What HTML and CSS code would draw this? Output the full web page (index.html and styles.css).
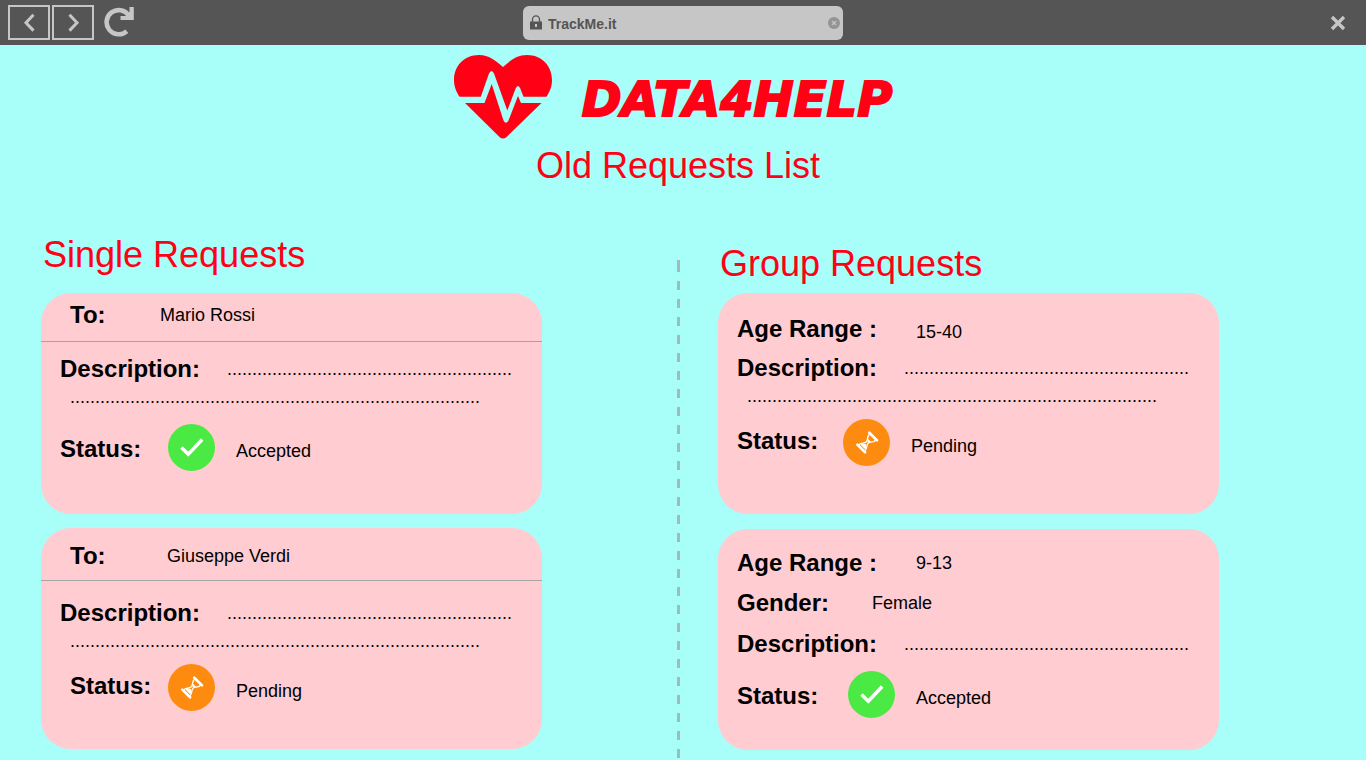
FILE: index.html
```html
<!DOCTYPE html>
<html lang="en">
<head>
<meta charset="utf-8">
<meta name="viewport" content="width=device-width, initial-scale=1">
<title>Data4Help – Old Requests List</title>
<link rel="stylesheet" href="styles.css">
</head>
<body>
<svg class="defs" aria-hidden="true">
  <symbol id="check" viewBox="0 0 47 47">
    <circle cx="23.5" cy="23.5" r="23.5" fill="#4be944"/>
    <path d="M13.500 23.500L20.300 30.300L34.200 15.500" fill="none" stroke="#fff" stroke-width="3.500"/>
  </symbol>
  <symbol id="hourglass" viewBox="0 0 47 47">
    <circle cx="23.5" cy="23.5" r="23.5" fill="#fd8b10"/>
    <g transform="translate(24.200 23.500) rotate(45) scale(.84)" fill="none" stroke="#fff">
      <path d="M-6.500 -10H6.500M-6.500 10H6.500" stroke-width="3.200" stroke-linecap="round"/>
      <path d="M-5.200 -9.500C-5.200 -4 -1.300 -3 -1.300 0S-5.200 4 -5.200 9.500M5.200 -9.500C5.200 -4 1.300 -3 1.300 0S5.200 4 5.200 9.500" stroke-width="1.500"/>
      <path d="M-4 7.500C-4 5 -1.500 2.500 0 2.500S4 5 4 7.500ZM-2.500 -3.800H2.500L0 -0.500Z" fill="#fff" stroke="none"/>
    </g>
  </symbol>
</svg>

<header class="browser">
  <nav class="browser-nav">
    <button class="nav-button" type="button" aria-label="Back">
      <svg width="38" height="31" viewBox="0 0 38 31"><path d="M23.500 7.800L16 15.700L23.500 23.600"/></svg>
    </button>
    <button class="nav-button" type="button" aria-label="Forward">
      <svg width="38" height="31" viewBox="0 0 38 31"><path d="M15.500 7.800L23 15.700L15.500 23.600"/></svg>
    </button>
    <button class="icon-button reload" type="button" aria-label="Reload">
      <svg width="30" height="30" viewBox="0 0 30 30">
        <path d="M22.800 24.200A12.100 12.100 0 1 1 24.800 8.500" fill="none" stroke="#c6c6c6" stroke-width="4.600"/>
        <path d="M25.500 0H29.800V13H16.500V9H22L25.500 5Z" fill="#c6c6c6"/>
      </svg>
    </button>
  </nav>
  <div class="address">
    <svg width="12" height="15" viewBox="0 0 12 15" aria-hidden="true">
      <path d="M2.500 7V4.500A3.500 3.700 0 0 1 9.500 4.500V7" fill="none" stroke="#555" stroke-width="1.300"/>
      <path d="M0 6.500H12V14.500H0ZM5 9V12H7V9Z" fill="#555" fill-rule="evenodd"/>
    </svg>
    <input class="address-input" type="text" value="TrackMe.it" aria-label="Address">
    <button class="icon-button" type="button" aria-label="Clear address">
      <svg width="12" height="12" viewBox="0 0 12 12"><circle cx="6" cy="6" r="6" fill="#949494"/><path d="M4 4L8 8M8 4L4 8" stroke="#c6c6c6" stroke-width="1.200"/></svg>
    </button>
  </div>
  <button class="icon-button close" type="button" aria-label="Close">
    <svg width="16" height="16" viewBox="0 0 16 16"><path d="M2 2L14 14M14 2L2 14" stroke="#c6c6c6" stroke-width="3.300"/></svg>
  </button>
</header>

<main class="page">
  <div class="brand">
    <svg class="heart" width="98" height="84" viewBox="0 0 98 84" aria-hidden="true">
      <path d="M49 12C57 5 63 0 73 0C88 0 98 11 98 25C98 32 95.500 37 92.500 41.700H69.500L66.300 33.500Q64 28.500 61.600 33.500L53.300 55.500L40 18.500Q37.500 13.500 35 18.500L26.800 41.700H5.500C2.500 37 0 32 0 25C0 11 10 0 25 0C35 0 41 5 49 12Z" fill="#ff0015"/>
      <path d="M11 48H30.500L37.700 29L49.500 65.500Q52 70 54.500 65.500L64 41L67 48H87.500L52.500 82Q49 85 45.500 82Z" fill="#ff0015"/>
    </svg>
    <span class="brand-name">DATA4HELP</span>
  </div>
  <h1 class="title">Old Requests List</h1>

  <div class="columns">
    <section class="column single">
      <h2 class="column-title">Single Requests</h2>
      <article class="card">
        <div class="card-head"><span class="label">To:</span><span class="value">Mario Rossi</span></div>
        <div class="row"><span class="label">Description:</span><span class="value">.........................................................</span></div>
        <p class="more">..................................................................................</p>
        <div class="row status"><span class="label">Status:</span><svg class="badge" aria-hidden="true"><use href="#check"/></svg><span class="value">Accepted</span></div>
      </article>
      <article class="card roomy">
        <div class="card-head"><span class="label">To:</span><span class="value">Giuseppe Verdi</span></div>
        <div class="row"><span class="label">Description:</span><span class="value">.........................................................</span></div>
        <p class="more">..................................................................................</p>
        <div class="row status"><span class="label">Status:</span><svg class="badge" aria-hidden="true"><use href="#hourglass"/></svg><span class="value">Pending</span></div>
      </article>
    </section>

    <div class="divider"></div>

    <section class="column group">
      <h2 class="column-title">Group Requests</h2>
      <article class="card">
        <div class="row age"><span class="label">Age Range :</span><span class="value">15-40</span></div>
        <div class="row"><span class="label">Description:</span><span class="value">.........................................................</span></div>
        <p class="more">..................................................................................</p>
        <div class="row status"><span class="label">Status:</span><svg class="badge" aria-hidden="true"><use href="#hourglass"/></svg><span class="value">Pending</span></div>
      </article>
      <article class="card detailed">
        <div class="row age"><span class="label">Age Range :</span><span class="value">9-13</span></div>
        <div class="row gender"><span class="label">Gender:</span><span class="value">Female</span></div>
        <div class="row"><span class="label">Description:</span><span class="value">.........................................................</span></div>
        <div class="row status"><span class="label">Status:</span><svg class="badge" aria-hidden="true"><use href="#check"/></svg><span class="value">Accepted</span></div>
      </article>
    </section>
  </div>
</main>
</body>
</html>
```
FILE: styles.css
```css
* {
  box-sizing: border-box;
}

body {
  margin: 0;
  min-height: 100vh;
  display: flex;
  flex-direction: column;
  background: #a8fffa;
  color: #000;
  font-family: "Liberation Sans", Arial, sans-serif;
}

svg {
  display: block;
  flex: none;
}

.defs {
  position: absolute;
  width: 0;
  height: 0;
}

/* Browser bar */
.browser {
  display: grid;
  grid-template-columns: 1fr minmax(0, 320px) 1fr;
  align-items: center;
  padding: 5px 20px 5px 8px;
  background: #555;
}

.browser-nav {
  display: flex;
  gap: 2px;
}

.nav-button {
  padding: 0;
  border: 2px solid #c6c6c6;
  background: none;
}

.nav-button path {
  fill: none;
  stroke: #c6c6c6;
  stroke-width: 3;
}

.icon-button {
  padding: 0;
  border: 0;
  background: none;
}

.reload {
  align-self: flex-start;
  margin: 2px 0 0 8px;
}

.close {
  justify-self: end;
}

.address {
  display: flex;
  align-items: center;
  gap: 6px;
  height: 34px;
  margin-left: 6px;
  margin-right: -6px;
  padding: 0 3px 0 7px;
  border-radius: 6px;
  background: #c6c6c6;
}

.address-input {
  flex: 1;
  min-width: 0;
  padding: 2px 0 0;
  border: 0;
  background: none;
  color: #555;
  font: bold 14px "Liberation Sans", Arial, sans-serif;
}

/* Page heading */
.page {
  flex: 1;
  display: flex;
  flex-direction: column;
}

.brand {
  display: flex;
  justify-content: center;
  align-items: center;
  gap: 30px;
  padding: 10px 20px 0 0;
}

.brand-name {
  padding-top: 4px;
  color: #ff0015;
  font: italic bold 48px/58px "DejaVu Sans", sans-serif;
  -webkit-text-stroke: 2px #ff0015;
}

.title,
.column-title {
  margin: 0;
  color: #ff0015;
  font-size: 36px;
  font-weight: normal;
  line-height: 40px;
}

.title {
  padding: 7px 10px 0 0;
  text-align: center;
}

/* Columns */
.columns {
  flex: 1;
  display: grid;
  grid-template-columns: 501fr 135fr 3px 38fr 501fr 147fr;
  padding-left: 41px;
}

.column {
  display: flex;
  flex-direction: column;
  padding-bottom: 11px;
}

.single {
  grid-column: 1;
  padding-top: 49px;
}

.group {
  grid-column: 5;
  padding-top: 58px;
}

.column-title {
  padding-left: 2px;
}

.single .column-title {
  margin-bottom: 18px;
}

.group .column-title {
  margin-bottom: 9px;
}

.divider {
  grid-column: 3;
  margin-top: 74px;
  background:
    linear-gradient(#9fbbbc, #9fbbbc) top / 3px 12px no-repeat,
    repeating-linear-gradient(transparent 0 3px, #9fbbbc 3px 12px, transparent 12px 18px);
}

/* Request cards */
.card {
  border-radius: 30px;
  background: #ffccd1;
  padding-bottom: 43px;
  font-size: 18px;
  line-height: 20px;
}

.card + .card {
  margin-top: 14px;
}

.card-head,
.row {
  display: flex;
  align-items: center;
}

.card-head {
  padding: 8px 29px 12px;
  border-bottom: 1px solid #a8a3a4;
}

.row {
  padding: 0 19px;
  margin-top: 13px;
}

.label {
  min-width: 167px;
  font-size: 24px;
  font-weight: bold;
  line-height: 28px;
  white-space: nowrap;
}

.card-head .label {
  min-width: 90px;
}

.more {
  margin: 4px 29px 0;
}

.badge {
  width: 47px;
  height: 47px;
  margin-right: 21px;
}

.status {
  margin-top: 17px;
}

.status .label {
  min-width: 108px;
  padding-top: 2px;
}

.status .value {
  padding-top: 6px;
}

.roomy {
  padding-bottom: 38px;
}

.roomy .card-head {
  padding: 14px 29px 10px;
}

.roomy .card-head .label {
  min-width: 97px;
}

.roomy .row {
  margin-top: 18px;
}

.roomy .status {
  margin-top: 13px;
  padding-left: 29px;
}

.roomy .status .label {
  min-width: 98px;
  padding: 0 0 4px;
}

.group .card {
  padding-top: 22px;
  padding-bottom: 48px;
}

.group .row {
  margin-top: 11px;
}

.group .age {
  margin-top: 0;
}

.age .label {
  min-width: 179px;
}

.age .value {
  padding-top: 6px;
}

.group .status {
  margin-top: 13px;
}

.group .status .label {
  min-width: 106px;
  padding: 0 0 4px;
}

.group .detailed {
  margin-top: 15px;
  padding-top: 20px;
  padding-bottom: 32px;
}

.detailed .row + .row {
  margin-top: 13px;
}

.detailed .row + .gender {
  margin-top: 12px;
}

.detailed .age .value {
  padding-top: 0;
}

.gender .label {
  min-width: 135px;
}

.group .detailed .status .label {
  min-width: 111px;
  padding: 2px 0 0;
}
```
